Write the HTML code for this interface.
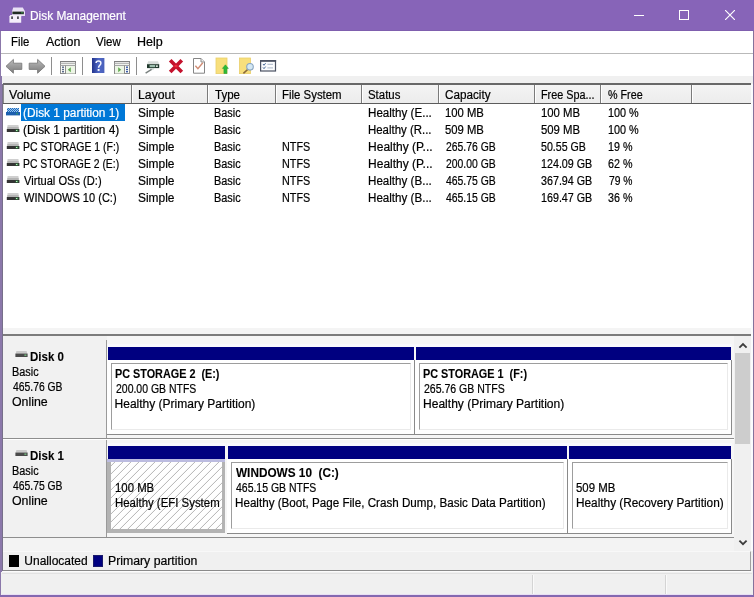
<!DOCTYPE html>
<html>
<head>
<meta charset="utf-8">
<title>Disk Management</title>
<style>
*{box-sizing:border-box;margin:0;padding:0}
html,body{width:754px;height:597px;overflow:hidden;background:#f0f0f0}
body{font-family:"Liberation Sans",sans-serif;font-size:12px;color:#000;position:relative}
.a,svg{position:absolute}
.t{position:absolute;white-space:pre;line-height:14px;height:14px;transform-origin:0 0;-webkit-text-stroke:0.2px}
.b{font-weight:bold;-webkit-text-stroke:0.1px}
#win{position:absolute;left:0;top:0;width:754px;height:597px;background:#f0f0f0;overflow:hidden}
.sep{position:absolute;top:57px;width:1px;height:18px;background:#8e8e8e}
.hc{position:absolute;top:85px;width:2px;height:18px;background:linear-gradient(90deg,#7b7b7b 0,#7b7b7b 60%,#fff 60%)}
.bar{position:absolute;height:13px;background:#000080}
.cell{position:absolute;height:75px;background:#fff;border-right:1px solid #8a8a8a;border-bottom:1px solid #8a8a8a}
.ibox{position:absolute;left:4px;top:3px;right:3px;bottom:4px;border:1px solid #9d9d9d;border-right-color:#eaeaea;border-bottom-color:#eaeaea}
</style>
</head>
<body>
<div id="win">

<div class="a" style="left:0;top:0;width:754px;height:31px;background:#8764b8"></div>
<div class="a" style="left:0;top:30px;width:754px;height:1px;background:#7f5fae"></div>
<svg style="left:9px;top:7px" width="17" height="17" viewBox="0 0 17 17">
<path d="M4.2 0.6h9.6l2.2 4v4.3H3V4.6z" fill="#e9e1f5"/>
<rect x="3.4" y="4.6" width="11.4" height="2.6" fill="#1f2b22"/>
<rect x="12.2" y="5.2" width="1.6" height="1.2" fill="#3c9a4a"/>
<path d="M0.4 9.2l1-1.2h10.2l0.6 1.2v6.6H0.4z" fill="#f3edfa"/>
<rect x="2.3" y="9.4" width="1.5" height="2.6" fill="#2b2b33"/>
<rect x="8.2" y="9.4" width="1.5" height="2.6" fill="#2b2b33"/>
</svg>
<div class="a" style="left:634px;top:15px;width:10px;height:1px;background:#fff"></div>
<div class="a" style="left:679px;top:10px;width:10px;height:10px;border:1px solid #fff"></div>
<svg style="left:725px;top:10px" width="10" height="10" viewBox="0 0 10 10"><path d="M0 0L10 10M10 0L0 10" stroke="#fff" stroke-width="1.15"/></svg>
<div class="a" style="left:0;top:31px;width:2px;height:566px;background:#8b78aa"></div>
<div class="a" style="left:2px;top:84px;width:1px;height:487px;background:#77708a"></div>
<div class="a" style="left:753px;top:31px;width:1px;height:566px;background:#84729c"></div>
<div class="a" style="left:0;top:595px;width:754px;height:2px;background:#8468b0"></div>
<div class="a" style="left:1px;top:31px;width:752px;height:22px;background:#fff"></div>
<div class="a" style="left:1px;top:53px;width:752px;height:1px;background:#b9b9b9"></div>
<div class="a" style="left:1px;top:54px;width:752px;height:22px;background:#fff"></div>
<div class="sep" style="left:51px"></div>
<div class="sep" style="left:82px"></div>
<div class="sep" style="left:136px"></div>
<svg style="left:5px;top:58px" width="18" height="17" viewBox="0 0 18 17">
<defs><linearGradient id="ga" x1="0" y1="0" x2="0" y2="1"><stop offset="0" stop-color="#bdbdbd"/><stop offset="0.5" stop-color="#9a9a9a"/><stop offset="1" stop-color="#7e7e7e"/></linearGradient></defs>
<path d="M1 8.3L8.4 1.4V5.2H16.8V11.4H8.4V15.2z" fill="url(#ga)" stroke="#7a7a7a" stroke-width="0.9" stroke-linejoin="round"/></svg>
<svg style="left:28px;top:58px" width="18" height="17" viewBox="0 0 18 17">
<path d="M17 8.3L9.6 1.4V5.2H1.2V11.4H9.6V15.2z" fill="url(#ga)" stroke="#7a7a7a" stroke-width="0.9" stroke-linejoin="round"/></svg>
<svg style="left:60px;top:61px" width="16" height="13" viewBox="0 0 16 13">
<rect x="0.5" y="0.5" width="15" height="12" fill="#fafcf8" stroke="#8c8c8c"/>
<rect x="0" y="0" width="16" height="1.2" fill="#808080"/><rect x="0" y="2.2" width="16" height="0.9" fill="#9a9a9a"/>
<rect x="1" y="1.2" width="14" height="1" fill="#e4e4e4"/>
<rect x="0" y="4" width="16" height="0.9" fill="#9c9c9c"/>
<rect x="5" y="4.5" width="1" height="8.5" fill="#8c8c8c"/>
<rect x="2" y="5.5" width="2" height="1.4" fill="#5a6a8a"/><rect x="2" y="7.8" width="2" height="1.4" fill="#5a6a8a"/><rect x="2" y="10" width="2" height="1.4" fill="#5a6a8a"/>
<rect x="6" y="5" width="9" height="7.5" fill="#edf6e6"/>
<path d="M10.8 6.2v5L7.8 8.7z" fill="#62aa50"/></svg>
<svg style="left:92.2px;top:58.2px" width="12.4" height="15.2" viewBox="0 0 13 16" preserveAspectRatio="none">
<defs><linearGradient id="gh" x1="0" y1="0" x2="1" y2="0"><stop offset="0" stop-color="#22338c"/><stop offset="0.55" stop-color="#4f68c6"/><stop offset="1" stop-color="#4a60bb"/></linearGradient></defs>
<rect x="0" y="0" width="13" height="16" fill="url(#gh)"/>
<path d="M4.3 5.2C4.3 2.6 9.3 2.4 9.3 5.4C9.3 7.6 6.9 7.6 6.9 10.2" fill="none" stroke="#f4f6ff" stroke-width="1.6"/>
<rect x="5.9" y="11.6" width="2" height="2" fill="#fff"/></svg>
<svg style="left:114px;top:61px" width="16" height="13" viewBox="0 0 16 13">
<rect x="0.5" y="0.5" width="15" height="12" fill="#fafcf8" stroke="#8c8c8c"/>
<rect x="0" y="0" width="16" height="1.2" fill="#808080"/><rect x="0" y="2.2" width="16" height="0.9" fill="#9a9a9a"/>
<rect x="1" y="1.2" width="14" height="1" fill="#e4e4e4"/>
<rect x="0" y="4" width="16" height="0.9" fill="#9c9c9c"/>
<rect x="10" y="4.5" width="1" height="8.5" fill="#8c8c8c"/>
<rect x="12" y="5.5" width="2" height="1.4" fill="#3a5aa8"/><rect x="12" y="7.8" width="2" height="1.4" fill="#3a5aa8"/><rect x="12" y="10" width="2" height="1.4" fill="#3a5aa8"/>
<rect x="1" y="5" width="9" height="7.5" fill="#edf6e6"/>
<path d="M4.2 6.2v5L7.2 8.7z" fill="#62aa50"/></svg>
<svg style="left:144px;top:60px" width="17" height="14" viewBox="0 0 17 14">
<path d="M4.2 1.2h9.8l1.2 3H3z" fill="#d9dedb"/>
<rect x="3" y="4.2" width="12.2" height="3.9" fill="#1f382b"/>
<rect x="5.6" y="5" width="5.6" height="2.2" fill="#9dbfae"/>
<rect x="12" y="5.4" width="1.8" height="1.5" fill="#eef8f0"/>
<path d="M5.4 8.2h5l-1 1.6h-3z" fill="#c4d2cc"/>
<path d="M7.6 9.4L1.6 13.2" stroke="#7a8280" stroke-width="1.4"/></svg>
<svg style="left:168px;top:58px" width="16" height="16" viewBox="0 0 16 16">
<path d="M2.2 2.2L13.8 14M13.8 2.2L2.2 14" stroke="#c4122d" stroke-width="3.7" stroke-linecap="butt"/>
<path d="M6.5 8.1h3" stroke="#ee2b3a" stroke-width="2.4"/></svg>
<svg style="left:192px;top:57px" width="14" height="17" viewBox="0 0 14 17">
<path d="M1.5 1.5H9L12.5 5V16.2H1.5z" fill="#fff" stroke="#858585"/>
<path d="M9 1.5V5H12.5" fill="#eee" stroke="#8d8d8d"/>
<path d="M3.4 8.8L5.9 11.6L10.8 5.8" fill="none" stroke="#d08c74" stroke-width="1.4"/></svg>
<svg style="left:215px;top:57px" width="15" height="17" viewBox="0 0 15 17">
<rect x="1" y="1" width="11" height="15.6" fill="#f8df7c" stroke="#e9cf6a" stroke-width="0.8"/>
<path d="M10.4 7.8L13.4 11.4H11.9V16.6H8.9V11.4H7.4z" fill="#2cba38" stroke="#23982e" stroke-width="0.5"/></svg>
<svg style="left:238px;top:57px" width="17" height="17" viewBox="0 0 17 17">
<rect x="1.5" y="1" width="11" height="15.6" fill="#f8df7c" stroke="#e9cf6a" stroke-width="0.8"/>
<path d="M10.2 12L5.4 16.4" stroke="#8a6a3a" stroke-width="1.6"/>
<circle cx="12" cy="9.8" r="3.3" fill="#d4e8f4" stroke="#8aa6c2" stroke-width="1.1"/></svg>
<svg style="left:260px;top:60px" width="17" height="12" viewBox="0 0 17 12">
<rect x="0.6" y="0.6" width="14.9" height="10.4" fill="#fbfcfe" stroke="#4b5263" stroke-width="1.2"/>
<rect x="0" y="0" width="16.1" height="1.8" fill="#4b5263"/>
<path d="M3 4l1 1.3L5.6 3.2M3 7.4l1 1.3L5.6 6.6" fill="none" stroke="#4a6a9a" stroke-width="1"/>
<path d="M7.4 4.4h5.6M7.4 7.8h5.6" stroke="#b9c3d2" stroke-width="1.2"/></svg>
<div class="a" style="left:3px;top:84px;width:748px;height:244px;background:#fff"></div>
<div class="a" style="left:3px;top:83.2px;width:748px;height:1.8px;background:#686868"></div>
<div class="a" style="left:3px;top:85px;width:748px;height:18px;background:linear-gradient(#f4f4f4,#ececec)"></div>
<div class="a" style="left:3px;top:102.7px;width:748px;height:1.6px;background:#5c5c5c"></div>
<div class="hc" style="left:131px"></div>
<div class="hc" style="left:207px"></div>
<div class="hc" style="left:275px"></div>
<div class="hc" style="left:361px"></div>
<div class="hc" style="left:438px"></div>
<div class="hc" style="left:534px"></div>
<div class="hc" style="left:600px"></div>
<div class="hc" style="left:691px"></div>
<div class="a" style="left:3px;top:85px;width:1px;height:18px;background:#8c8c8c"></div>
<div class="a" style="left:21px;top:104px;width:104px;height:16.6px;background:#0078d7"></div>
<svg style="left:6px;top:108px" width="14" height="8" viewBox="0 0 14 8">
<defs><pattern id="ck" width="2" height="2" patternUnits="userSpaceOnUse"><rect width="2" height="2" fill="#9cc4ea"/><rect width="1" height="1" fill="#1e6cc0"/><rect x="1" y="1" width="1" height="1" fill="#1e6cc0"/></pattern></defs>
<rect x="1" y="0" width="12" height="4" fill="url(#ck)"/>
<rect x="0" y="4" width="14" height="3.4" fill="#1c5fae"/>
<rect x="10" y="4.8" width="2" height="1.6" fill="#2a8a7a"/></svg>
<svg style="left:6px;top:125px" width="14" height="8" viewBox="0 0 14 8">
<path d="M1.6 0h10.8L13 4H1z" fill="#cfcfcf"/><rect x="1.4" y="2" width="11.2" height="2" fill="#b4b4b4"/>
<rect x="0.8" y="4" width="12.6" height="3" fill="#343434"/>
<rect x="9.6" y="4.6" width="2.6" height="1.8" fill="#2f8f3f"/><rect x="10.2" y="5" width="1" height="1" fill="#e8ffe8"/></svg>
<svg style="left:6px;top:142px" width="14" height="8" viewBox="0 0 14 8">
<path d="M1.6 0h10.8L13 4H1z" fill="#cfcfcf"/><rect x="1.4" y="2" width="11.2" height="2" fill="#b4b4b4"/>
<rect x="0.8" y="4" width="12.6" height="3" fill="#343434"/>
<rect x="9.6" y="4.6" width="2.6" height="1.8" fill="#2f8f3f"/><rect x="10.2" y="5" width="1" height="1" fill="#e8ffe8"/></svg>
<svg style="left:6px;top:159px" width="14" height="8" viewBox="0 0 14 8">
<path d="M1.6 0h10.8L13 4H1z" fill="#cfcfcf"/><rect x="1.4" y="2" width="11.2" height="2" fill="#b4b4b4"/>
<rect x="0.8" y="4" width="12.6" height="3" fill="#343434"/>
<rect x="9.6" y="4.6" width="2.6" height="1.8" fill="#2f8f3f"/><rect x="10.2" y="5" width="1" height="1" fill="#e8ffe8"/></svg>
<svg style="left:6px;top:176px" width="14" height="8" viewBox="0 0 14 8">
<path d="M1.6 0h10.8L13 4H1z" fill="#cfcfcf"/><rect x="1.4" y="2" width="11.2" height="2" fill="#b4b4b4"/>
<rect x="0.8" y="4" width="12.6" height="3" fill="#343434"/>
<rect x="9.6" y="4.6" width="2.6" height="1.8" fill="#2f8f3f"/><rect x="10.2" y="5" width="1" height="1" fill="#e8ffe8"/></svg>
<svg style="left:6px;top:193px" width="14" height="8" viewBox="0 0 14 8">
<path d="M1.6 0h10.8L13 4H1z" fill="#cfcfcf"/><rect x="1.4" y="2" width="11.2" height="2" fill="#b4b4b4"/>
<rect x="0.8" y="4" width="12.6" height="3" fill="#343434"/>
<rect x="9.6" y="4.6" width="2.6" height="1.8" fill="#2f8f3f"/><rect x="10.2" y="5" width="1" height="1" fill="#e8ffe8"/></svg>
<div class="a" style="left:3px;top:328px;width:748px;height:6px;background:#f4f4f4"></div>
<div class="a" style="left:3px;top:335px;width:731px;height:203px;background:#f1f1f1"></div>
<div class="a" style="left:3px;top:438px;width:731px;height:1px;background:#8e8e8e"></div>
<div class="a" style="left:3px;top:537px;width:731px;height:1px;background:#8e8e8e"></div>
<div class="a" style="left:3px;top:439px;width:731px;height:1px;background:#fff"></div>
<div class="a" style="left:106px;top:340px;width:1px;height:98px;background:#9a9a9a"></div>
<div class="a" style="left:106px;top:440px;width:1px;height:97px;background:#9a9a9a"></div>
<div class="a" style="left:107px;top:336px;width:627px;height:102px;background:#f6f6f6"></div>
<div class="a" style="left:107px;top:440px;width:627px;height:97px;background:#f6f6f6"></div>
<svg style="left:14.6px;top:350.6px" width="13" height="7" viewBox="0 0 13 7">
<path d="M1.4 0h10.2L12.4 3H0.6z" fill="#c9c9c9"/>
<rect x="0.4" y="2.6" width="12.2" height="3.4" fill="#4a4a4a"/>
<rect x="9.4" y="3.4" width="2" height="1.6" fill="#6fae78"/></svg>
<svg style="left:14.6px;top:449.6px" width="13" height="7" viewBox="0 0 13 7">
<path d="M1.4 0h10.2L12.4 3H0.6z" fill="#c9c9c9"/>
<rect x="0.4" y="2.6" width="12.2" height="3.4" fill="#4a4a4a"/>
<rect x="9.4" y="3.4" width="2" height="1.6" fill="#6fae78"/></svg>
<div class="a" style="left:107px;top:344px;width:308px;height:3px;background:#f9f9fd"></div>
<div class="bar" style="left:108px;top:347px;width:306px"></div>
<div class="cell" style="left:107px;top:360px;width:308px"><div class="ibox"></div></div>
<div class="a" style="left:415px;top:344px;width:317px;height:3px;background:#f9f9fd"></div>
<div class="bar" style="left:416px;top:347px;width:315px"></div>
<div class="cell" style="left:415px;top:360px;width:317px"><div class="ibox"></div></div>
<div class="a" style="left:107px;top:443px;width:119px;height:3px;background:#f9f9fd"></div>
<div class="bar" style="left:108px;top:446px;width:117px"></div>
<div class="a" style="left:107px;top:459px;width:118px;height:74px;background:#b3b3b3"></div>
<div class="a" style="left:107px;top:459px;width:118px;height:3px;background:#bcbce0"></div>
<svg style="left:111px;top:462px" width="111" height="67" viewBox="0 0 111 67">
<defs><pattern id="hx" width="8" height="8" patternUnits="userSpaceOnUse"><rect width="8" height="8" fill="#fff"/><path d="M4.9 -1L-1 4.9M9 2.9L2.9 9" stroke="#a6a6a6" stroke-width="0.85"/></pattern></defs>
<rect width="111" height="67" fill="url(#hx)"/></svg>
<div class="a" style="left:227px;top:443px;width:341px;height:3px;background:#f9f9fd"></div>
<div class="bar" style="left:228px;top:446px;width:339px"></div>
<div class="cell" style="left:227px;top:459px;width:341px"><div class="ibox"></div></div>
<div class="a" style="left:568px;top:443px;width:164px;height:3px;background:#f9f9fd"></div>
<div class="bar" style="left:569px;top:446px;width:162px"></div>
<div class="cell" style="left:568px;top:459px;width:164px"><div class="ibox"></div></div>
<div class="a" style="left:734px;top:335px;width:17px;height:216px;background:#f0f0f0"></div>
<div class="a" style="left:751px;top:84px;width:2px;height:467px;background:#fbfbfd"></div>
<div class="a" style="left:3px;top:334px;width:748px;height:1.5px;background:#7c7c7c"></div>
<div class="a" style="left:735px;top:353px;width:15px;height:91px;background:#cdcdcd"></div>
<svg style="left:737.5px;top:341.5px" width="10" height="7" viewBox="0 0 10 7"><path d="M1.4 5.6L5 2L8.6 5.6" fill="none" stroke="#3c3c3c" stroke-width="1.8"/></svg>
<svg style="left:737.5px;top:539.3px" width="10" height="7" viewBox="0 0 10 7"><path d="M1.4 1.6L5 5.2L8.6 1.6" fill="none" stroke="#3c3c3c" stroke-width="1.8"/></svg>
<div class="a" style="left:3px;top:538px;width:731px;height:13px;background:#f3f3f3"></div>
<div class="a" style="left:3px;top:551px;width:748px;height:20px;background:#f0f0f0;border-right:1px solid #a0a0a0;border-top:1px solid #f8f8f8"></div>
<div class="a" style="left:3px;top:570px;width:748px;height:1px;background:#8a8a8a"></div>
<div class="a" style="left:8.5px;top:555px;width:10.5px;height:11.8px;background:#000"></div>
<div class="a" style="left:93px;top:555px;width:10px;height:12px;background:#000080;border:1px solid #1a1a6a"></div>
<div class="a" style="left:1px;top:572px;width:752px;height:23px;background:#f0f0f0"></div>
<div class="a" style="left:2px;top:571px;width:750px;height:1px;background:#fcfcfc"></div>
<div class="a" style="left:2px;top:573px;width:750px;height:1px;background:#e2e2e2"></div>
<div class="a" style="left:2px;top:594px;width:750px;height:1px;background:#e8e0f4"></div>
<div class="a" style="left:532px;top:575px;width:1px;height:19px;background:#d4d4d4"></div>
<div class="a" style="left:533px;top:575px;width:1px;height:19px;background:#fafafa"></div>
<div class="a" style="left:666px;top:575px;width:1px;height:19px;background:#fafafa"></div>
<div class="a" style="left:665px;top:575px;width:1px;height:19px;background:#d4d4d4"></div>
<div id="tx" class="a" style="left:0;top:0;width:754px;height:597px;will-change:transform">
<div class="t" style="left:29.5px;top:9px;transform:scaleX(0.991);color:#fff">Disk Management</div>
<div class="t" style="left:11.0px;top:35px;transform:scaleX(0.944)">File</div>
<div class="t" style="left:46.0px;top:35px;transform:scaleX(1.03)">Action</div>
<div class="t" style="left:96.0px;top:35px;transform:scaleX(0.962)">View</div>
<div class="t" style="left:136.5px;top:35px;transform:scaleX(1.044)">Help</div>
<div class="t" style="left:9.2px;top:88px;transform:scaleX(1.04)">Volume</div>
<div class="t" style="left:137.6px;top:88px;transform:scaleX(1.023)">Layout</div>
<div class="t" style="left:214.7px;top:88px;transform:scaleX(0.962)">Type</div>
<div class="t" style="left:281.5px;top:88px;transform:scaleX(0.951)">File System</div>
<div class="t" style="left:368.1px;top:88px;transform:scaleX(0.951)">Status</div>
<div class="t" style="left:444.7px;top:88px;transform:scaleX(0.976)">Capacity</div>
<div class="t" style="left:541.1px;top:88px;transform:scaleX(0.902)">Free Spa...</div>
<div class="t" style="left:608.2px;top:88px;transform:scaleX(0.895)">% Free</div>
<div class="t" style="left:23.2px;top:106px;transform:scaleX(0.989);color:#fff">(Disk 1 partition 1)</div>
<div class="t" style="left:137.6px;top:106px;transform:scaleX(0.994)">Simple</div>
<div class="t" style="left:213.7px;top:106px;transform:scaleX(0.907)">Basic</div>
<div class="t" style="left:368.1px;top:106px;transform:scaleX(0.967)">Healthy (E...</div>
<div class="t" style="left:444.7px;top:106px;transform:scaleX(0.94)">100 MB</div>
<div class="t" style="left:541.1px;top:106px;transform:scaleX(0.945)">100 MB</div>
<div class="t" style="left:607.7px;top:106px;transform:scaleX(0.903)">100 %</div>
<div class="t" style="left:23.2px;top:123px;transform:scaleX(0.989)">(Disk 1 partition 4)</div>
<div class="t" style="left:137.6px;top:123px;transform:scaleX(0.994)">Simple</div>
<div class="t" style="left:213.7px;top:123px;transform:scaleX(0.907)">Basic</div>
<div class="t" style="left:368.1px;top:123px;transform:scaleX(0.952)">Healthy (R...</div>
<div class="t" style="left:444.7px;top:123px;transform:scaleX(0.94)">509 MB</div>
<div class="t" style="left:541.1px;top:123px;transform:scaleX(0.945)">509 MB</div>
<div class="t" style="left:607.7px;top:123px;transform:scaleX(0.903)">100 %</div>
<div class="t" style="left:23.2px;top:140px;transform:scaleX(0.872)">PC STORAGE 1 (F:)</div>
<div class="t" style="left:137.6px;top:140px;transform:scaleX(0.994)">Simple</div>
<div class="t" style="left:213.7px;top:140px;transform:scaleX(0.907)">Basic</div>
<div class="t" style="left:281.5px;top:140px;transform:scaleX(0.9)">NTFS</div>
<div class="t" style="left:368.1px;top:140px">Healthy (P...</div>
<div class="t" style="left:445.7px;top:140px;transform:scaleX(0.865)">265.76 GB</div>
<div class="t" style="left:541.1px;top:140px;transform:scaleX(0.886)">50.55 GB</div>
<div class="t" style="left:607.7px;top:140px;transform:scaleX(0.893)">19 %</div>
<div class="t" style="left:23.2px;top:157px;transform:scaleX(0.865)">PC STORAGE 2 (E:)</div>
<div class="t" style="left:137.6px;top:157px;transform:scaleX(0.994)">Simple</div>
<div class="t" style="left:213.7px;top:157px;transform:scaleX(0.907)">Basic</div>
<div class="t" style="left:281.5px;top:157px;transform:scaleX(0.9)">NTFS</div>
<div class="t" style="left:368.1px;top:157px">Healthy (P...</div>
<div class="t" style="left:445.7px;top:157px;transform:scaleX(0.865)">200.00 GB</div>
<div class="t" style="left:541.1px;top:157px;transform:scaleX(0.893)">124.09 GB</div>
<div class="t" style="left:607.7px;top:157px;transform:scaleX(0.893)">62 %</div>
<div class="t" style="left:24.2px;top:174px;transform:scaleX(0.926)">Virtual OSs (D:)</div>
<div class="t" style="left:137.6px;top:174px;transform:scaleX(0.994)">Simple</div>
<div class="t" style="left:213.7px;top:174px;transform:scaleX(0.907)">Basic</div>
<div class="t" style="left:281.5px;top:174px;transform:scaleX(0.9)">NTFS</div>
<div class="t" style="left:368.1px;top:174px;transform:scaleX(0.967)">Healthy (B...</div>
<div class="t" style="left:445.7px;top:174px;transform:scaleX(0.867)">465.75 GB</div>
<div class="t" style="left:541.1px;top:174px;transform:scaleX(0.893)">367.94 GB</div>
<div class="t" style="left:608.7px;top:174px;transform:scaleX(0.857)">79 %</div>
<div class="t" style="left:24.2px;top:191px;transform:scaleX(0.92)">WINDOWS 10 (C:)</div>
<div class="t" style="left:137.6px;top:191px;transform:scaleX(0.994)">Simple</div>
<div class="t" style="left:213.7px;top:191px;transform:scaleX(0.907)">Basic</div>
<div class="t" style="left:281.5px;top:191px;transform:scaleX(0.9)">NTFS</div>
<div class="t" style="left:368.1px;top:191px;transform:scaleX(0.967)">Healthy (B...</div>
<div class="t" style="left:445.7px;top:191px;transform:scaleX(0.867)">465.15 GB</div>
<div class="t" style="left:541.1px;top:191px;transform:scaleX(0.893)">169.47 GB</div>
<div class="t" style="left:607.7px;top:191px;transform:scaleX(0.893)">36 %</div>
<div class="t b" style="left:29.7px;top:350px;transform:scaleX(0.959)">Disk 0</div>
<div class="t" style="left:11.6px;top:365px;transform:scaleX(0.907)">Basic</div>
<div class="t" style="left:12.6px;top:380px;transform:scaleX(0.863)">465.76 GB</div>
<div class="t" style="left:11.6px;top:395px;transform:scaleX(1.03)">Online</div>
<div class="t b" style="left:29.7px;top:449px;transform:scaleX(0.959)">Disk 1</div>
<div class="t" style="left:11.6px;top:464px;transform:scaleX(0.907)">Basic</div>
<div class="t" style="left:12.6px;top:479px;transform:scaleX(0.863)">465.75 GB</div>
<div class="t" style="left:11.6px;top:494px;transform:scaleX(1.03)">Online</div>
<div class="t b" style="left:114.6px;top:367px;transform:scaleX(0.902)">PC STORAGE 2  (E:)</div>
<div class="t" style="left:115.6px;top:382px;transform:scaleX(0.872)">200.00 GB NTFS</div>
<div class="t" style="left:114.6px;top:397px">Healthy (Primary Partition)</div>
<div class="t b" style="left:422.6px;top:367px;transform:scaleX(0.904)">PC STORAGE 1  (F:)</div>
<div class="t" style="left:423.6px;top:382px;transform:scaleX(0.877)">265.76 GB NTFS</div>
<div class="t" style="left:422.6px;top:397px;transform:scaleX(1.004)">Healthy (Primary Partition)</div>
<div class="t" style="left:114.6px;top:481px;transform:scaleX(0.948)">100 MB</div>
<div class="t" style="left:114.6px;top:496px;transform:scaleX(0.951);width:111.9px;overflow:hidden">Healthy (EFI System</div>
<div class="t b" style="left:235.6px;top:466px;transform:scaleX(0.982)">WINDOWS 10  (C:)</div>
<div class="t" style="left:235.6px;top:481px;transform:scaleX(0.872)">465.15 GB NTFS</div>
<div class="t" style="left:234.6px;top:496px;transform:scaleX(0.97)">Healthy (Boot, Page File, Crash Dump, Basic Data Partition)</div>
<div class="t" style="left:575.5px;top:481px;transform:scaleX(0.95)">509 MB</div>
<div class="t" style="left:575.5px;top:496px;transform:scaleX(0.984)">Healthy (Recovery Partition)</div>
<div class="t" style="left:24.3px;top:554px">Unallocated</div>
<div class="t" style="left:107.6px;top:554px;transform:scaleX(1.022)">Primary partition</div>
</div>
</div>
</body>
</html>
